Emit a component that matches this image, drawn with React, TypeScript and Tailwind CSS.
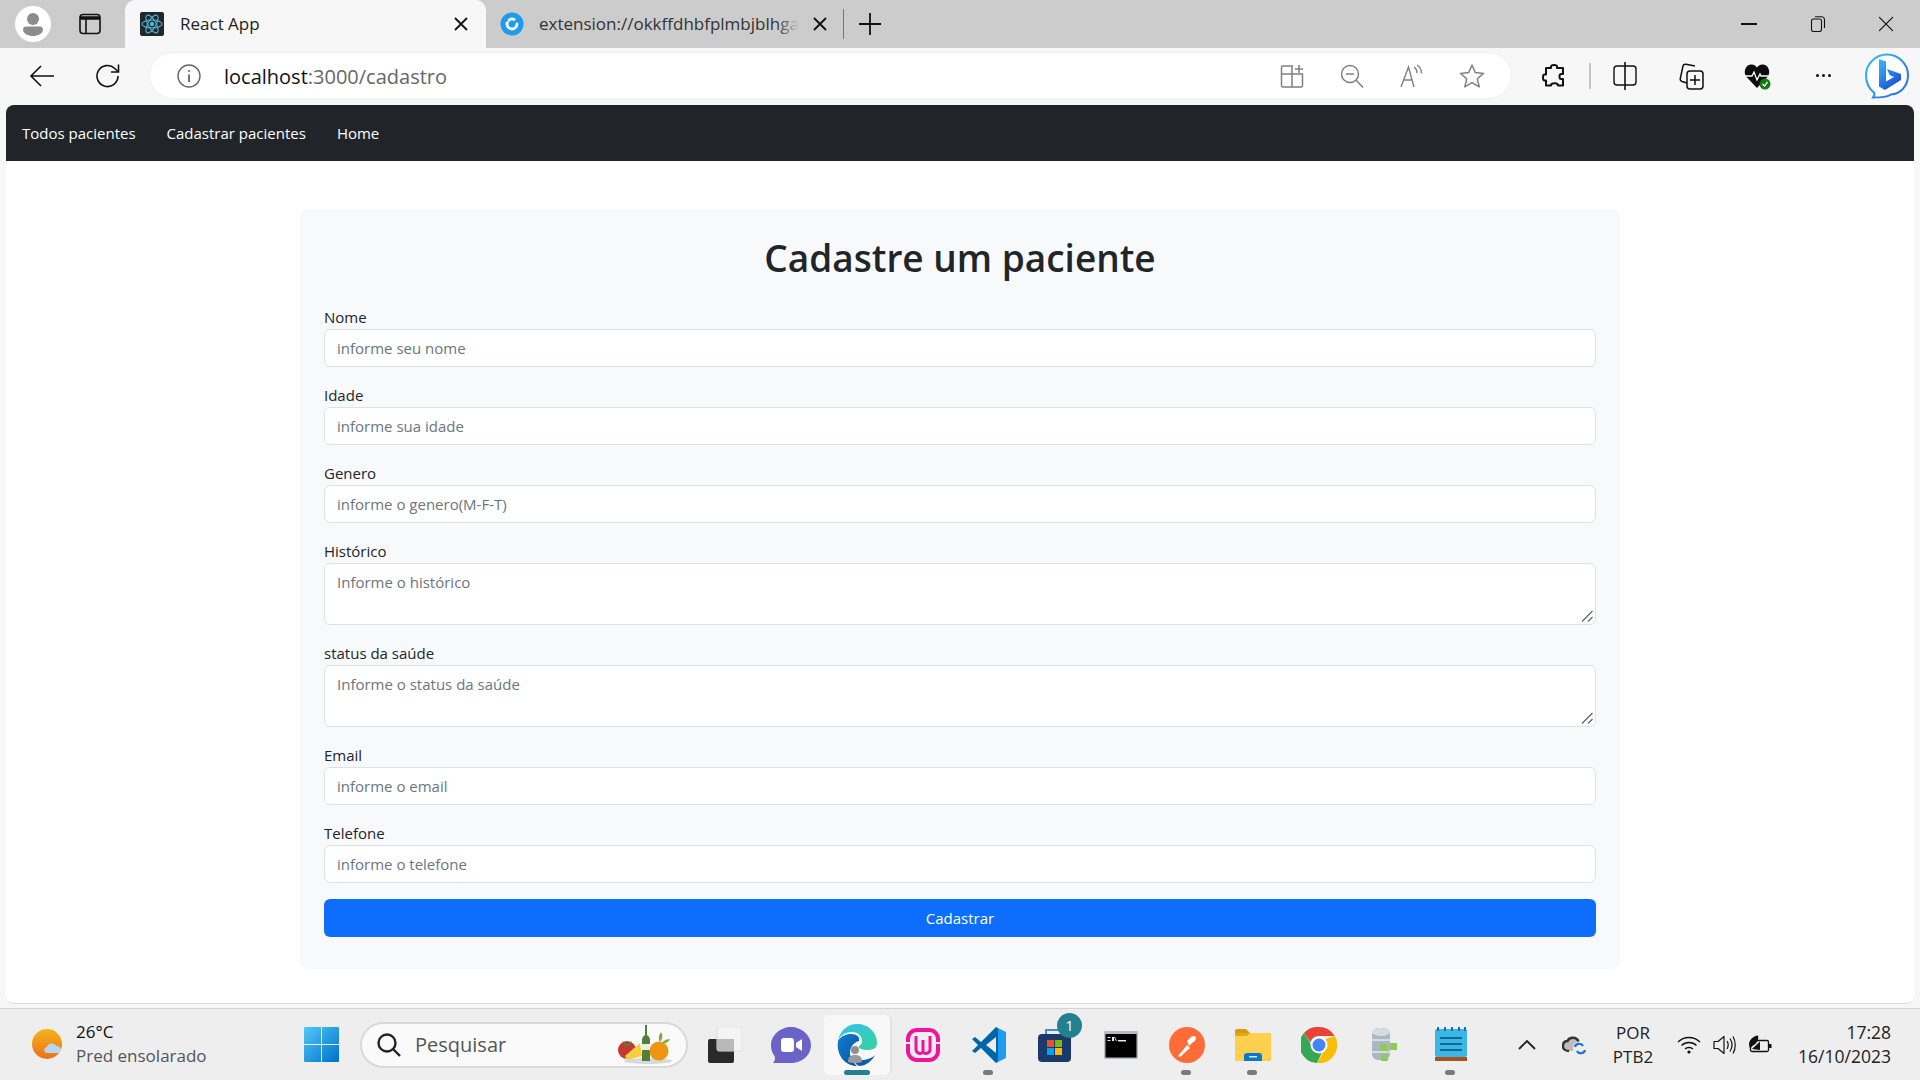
import React from "react";

const font = { fontFamily: '"Open Sans", "Noto Sans", sans-serif' };

function Avatar() {
  return (
    <svg width="36" height="36" viewBox="0 0 36 36">
      <circle cx="18" cy="18" r="18" fill="#ffffff" />
      <circle cx="18" cy="13" r="6" fill="#8c8c8c" />
      <path d="M8 23.5c0-2 1.500-3 3-3h14c1.500 0 3 1 3 3 0 4-5 6.500-10 6.500s-10-2.500-10-6.500z" fill="#8c8c8c" />
    </svg>
  );
}

function TabsIcon() {
  return (
    <svg width="22" height="22" viewBox="0 0 22 22" fill="none" stroke="#111" strokeWidth="1.600">
      <rect x="1" y="1.500" width="20" height="19" rx="3" />
      <path d="M1 5h20" strokeWidth="3.500" />
      <path d="M7 6v14" />
    </svg>
  );
}

function ReactFavicon() {
  return (
    <svg width="24" height="24" viewBox="0 0 24 24" fill="none" stroke="#4fb6d6" strokeWidth="1.100">
      <rect width="24" height="24" rx="2" fill="#22272b" stroke="none" />
      <circle cx="12" cy="12" r="2.200" fill="#4fb6d6" stroke="none" />
      <ellipse cx="12" cy="12" rx="10" ry="4" />
      <ellipse cx="12" cy="12" rx="10" ry="4" transform="rotate(60 12 12)" />
      <ellipse cx="12" cy="12" rx="10" ry="4" transform="rotate(120 12 12)" />
    </svg>
  );
}

function ExtFavicon() {
  return (
    <svg width="24" height="24" viewBox="0 0 24 24" fill="none">
      <circle cx="12" cy="12" r="11.500" fill="#1e9bf0" />
      <path d="M17 12a5 5 0 1 1-3-4.600" stroke="#fff" strokeWidth="2.800" strokeLinecap="round" />
      <path d="M7.500 9.500L5 5.500" stroke="#1e9bf0" strokeWidth="2" />
    </svg>
  );
}

function CloseX({ size = 14, sw = 1.800 }: { size?: number; sw?: number }) {
  return (
    <svg width={size} height={size} viewBox="0 0 14 14" stroke="#111" strokeWidth={sw}>
      <path d="M1 1l12 12M13 1L1 13" />
    </svg>
  );
}

function Back() {
  return (
    <svg width="26" height="24" viewBox="0 0 26 24" fill="none" stroke="#111" strokeWidth="1.600">
      <path d="M25 12H2M12 2L2 12l10 10" />
    </svg>
  );
}

function Reload() {
  return (
    <svg width="26" height="26" viewBox="0 0 26 26" fill="none" stroke="#111" strokeWidth="1.600">
      <path d="M23 13a10.500 10.500 0 1 1-3.200-7.500L23 8.500" />
      <path d="M23.500 1.500v7.500H16" />
    </svg>
  );
}

function Info() {
  return (
    <svg width="24" height="24" viewBox="0 0 24 24" fill="none" stroke="#666" strokeWidth="1.400">
      <circle cx="12" cy="12" r="11" />
      <path d="M12 10.500V18" strokeWidth="1.800" />
      <circle cx="12" cy="7" r="1" fill="#666" stroke="none" />
    </svg>
  );
}

function AddressIcons() {
  return (
    <>
      <div className="flex w-[60px] justify-center">
        <svg width="24" height="24" viewBox="0 0 24 24" fill="none" stroke="#808080" strokeWidth="1.500">
          <path d="M13 2H3a1.500 1.500 0 0 0-1.500 1.500v18A1.500 1.500 0 0 0 3 23h18a1.500 1.500 0 0 0 1.500-1.500V10H1.500M12 2v21" />
          <path d="M19 1v8M15 5h8" />
        </svg>
      </div>
      <div className="flex w-[60px] justify-center">
        <svg width="24" height="24" viewBox="0 0 24 24" fill="none" stroke="#808080" strokeWidth="1.500">
          <circle cx="10" cy="10" r="8.500" />
          <path d="M16 16l7 7.500M6 10h8" />
        </svg>
      </div>
      <div className="flex w-[60px] justify-center">
        <svg width="26" height="24" viewBox="0 0 26 24" fill="none" stroke="#808080" strokeWidth="1.400">
          <path d="M2 23L9.500 3 15 23M4.500 16h8.500" />
          <path d="M15 3c2 1.500 3 3.500 3 6M18 1c3 2 4.500 5 4.500 8.500" />
        </svg>
      </div>
      <div className="flex w-[60px] justify-center">
        <svg width="26" height="26" viewBox="0 0 26 26" fill="none" stroke="#808080" strokeWidth="1.500">
          <path d="M13 2l3.300 7.600 8.200.8-6.200 5.400 1.900 8.100L13 19.700 5.800 23.900l1.900-8.100L1.500 10.400l8.200-.8z" strokeLinejoin="round" />
        </svg>
      </div>
    </>
  );
}

function Puzzle() {
  return (
    <svg width="24" height="26" viewBox="0 0 24 26" fill="none" stroke="#111" strokeWidth="2">
      <path d="M9 3.500C9 1.500 15 1.500 15 3.500V5h6v6h-2c-2 0-2 5 0 5h2v6.500h-5c0-3-7-3-7 0H4v-5H2.500c-2 0-2-6 0-6H4V5h5z" strokeLinejoin="round" />
    </svg>
  );
}

function SplitIcon() {
  return (
    <svg width="24" height="30" viewBox="0 0 24 30" fill="none" stroke="#111" strokeWidth="1.400">
      <rect x="1" y="5" width="22" height="19" rx="3" />
      <path d="M12 1v28" strokeWidth="1.600" />
    </svg>
  );
}

function CollectionsIcon() {
  return (
    <svg width="26" height="28" viewBox="0 0 26 28" fill="none" stroke="#111" strokeWidth="1.500">
      <path d="M9 21l-5-1.500C2.500 19 2 18 2.300 16.500L5 4c.3-1.500 1.500-2 3-1.800L17 4" />
      <rect x="9" y="9" width="16" height="18" rx="3" fill="#f7f7f7" />
      <path d="M17 13v10M12 18h10" />
    </svg>
  );
}

function HealthIcon() {
  return (
    <svg width="28" height="28" viewBox="0 0 28 28" fill="none">
      <path d="M13 26L2.500 15C-1 11 1 3 7 2.500c3-.2 5 1.500 6 3 1-1.500 3-3.200 6-3 6 .5 8 8.500 4.500 12.500z" fill="#0c0c0c" />
      <path d="M1 14h7l2-4 3 8 3-6 1 2h9" stroke="#fff" strokeWidth="1.300" />
      <circle cx="21" cy="22" r="5.500" fill="#107c10" />
      <path d="M18.500 22l2 2 3-4" stroke="#fff" strokeWidth="1.300" />
    </svg>
  );
}

function Bing() {
  return (
    <svg width="46" height="46" viewBox="0 0 46 46" fill="none">
      <defs>
        <linearGradient id="bingRing" x1="0" y1="0" x2="1" y2="1">
          <stop offset="0" stopColor="#35c1f1" />
          <stop offset="1" stopColor="#2563e8" />
        </linearGradient>
        <linearGradient id="bingB" x1="0" y1="0" x2="0.600" y2="1">
          <stop offset="0" stopColor="#37bdf8" />
          <stop offset="1" stopColor="#1b4fd8" />
        </linearGradient>
      </defs>
      <path d="M23 1.500c11 0 21 9 21 20.500S36 41 27 41.500c-3 2-10 3-18 3 1-1.500 2-3 1.500-4.500C5 36 2 29 2 22 2 10.500 12 1.500 23 1.500z" fill="#fff" stroke="url(#bingRing)" strokeWidth="2" />
      <path d="M15 6l7 2.500v20l8-4.500-4.500-2-2.500-6 14 5v6l-16 10-6-3.500z" fill="url(#bingB)" />
    </svg>
  );
}

function Weather() {
  return (
    <svg width="34" height="34" viewBox="0 0 34 34">
      <defs>
        <linearGradient id="sun" x1="0" y1="0" x2="0" y2="1">
          <stop offset="0" stopColor="#f8b21c" />
          <stop offset="1" stopColor="#ea7317" />
        </linearGradient>
      </defs>
      <circle cx="15" cy="16" r="15" fill="url(#sun)" />
      <path d="M15 25c-3 0-4.500-5 0-6 .5-3.500 7-5 9-1 5-.5 7 6 2.500 7z" fill="#b8d7f2" />
    </svg>
  );
}

function WinLogo() {
  return (
    <svg width="35" height="35" viewBox="0 0 35 35">
      <defs>
        <linearGradient id="win" x1="0" y1="0" x2="1" y2="1">
          <stop offset="0" stopColor="#52c8f8" />
          <stop offset="1" stopColor="#0070c9" />
        </linearGradient>
      </defs>
      <path d="M1 0h16v17H0V1a1 1 0 0 1 1-1zM18 0h16a1 1 0 0 1 1 1v16H18zM0 18h17v17H1a1 1 0 0 1-1-1zM18 18h17v16a1 1 0 0 1-1 1H18z" fill="url(#win)" />
    </svg>
  );
}

function Food() {
  return (
    <svg width="56" height="42" viewBox="0 0 56 42">
      <ellipse cx="30" cy="37" rx="24" ry="3" fill="#d8d8d8" />
      <circle cx="9" cy="26" r="9" fill="#c5382f" />
      <path d="M4 17l5 3 5-3-3 5H7z" fill="#3d8a3a" />
      <path d="M27 1h2v10c3 2 3 4 3 6v20h-8V17c0-2 0-4 3-6z" fill="#4f7f3a" />
      <rect x="24" y="20" width="8" height="6" fill="#f0ece0" />
      <circle cx="41" cy="27" r="9.500" fill="#ee9512" />
      <path d="M42 18c-2-4-1-7 1-10 2 3 2 7-1 10zM44 19c2-3 5-4 8-4-1 3-4 5-8 4z" fill="#85a83a" />
      <path d="M7 32l15-13 2 13-15 4z" fill="#f7cf3d" />
    </svg>
  );
}

function TaskView() {
  return (
    <svg width="34" height="36" viewBox="0 0 34 36">
      <rect x="0" y="12" width="26" height="24" rx="2" fill="#2a2a2a" />
      <rect x="9" y="0" width="25" height="24" rx="2" fill="#f4f4f4" stroke="#e0e0e0" />
      <rect x="9" y="12" width="17" height="12" fill="#b9b9b9" />
    </svg>
  );
}

function ChatIcon() {
  return (
    <svg width="40" height="36" viewBox="0 0 40 36">
      <path d="M20 0c10 0 20 8 20 18 0 11-10 18-20 18H2c2-2 2.500-5 1.500-7C1 26 0 22 0 18 0 8 10 0 20 0z" fill="#6b63c8" />
      <rect x="10" y="11" width="13" height="14" rx="3" fill="#fff" />
      <path d="M25 16l6-4v12l-6-4z" fill="#fff" />
    </svg>
  );
}

function EdgeIcon() {
  return (
    <svg width="42" height="44" viewBox="0 0 42 44">
      <defs>
        <linearGradient id="edgeA" x1="0" y1="0" x2="1" y2="1">
          <stop offset="0" stopColor="#35c1f1" />
          <stop offset="1" stopColor="#36d39a" />
        </linearGradient>
        <linearGradient id="edgeB" x1="0" y1="0" x2="1" y2="1">
          <stop offset="0" stopColor="#0f7fd0" />
          <stop offset="1" stopColor="#0a4f9e" />
        </linearGradient>
      </defs>
      <path d="M2 18C4 7 12 1 21 1c11 0 20 8 20 19 0 5-4 7-9 7-5 0-9-1-9-3 0-2 3-2 3-6 0-5-4-9-10-9C10 9 4 12 2 18z" fill="url(#edgeA)" />
      <path d="M2 18c3-5 8-7 13-7 6 0 9 3 8 7-5 1-9 6-9 12 0 4 2 9 7 13C10 43 0 33 2 18z" fill="url(#edgeB)" />
      <path d="M23 43c-4-2-6-6-6-8 4 3 17 3 22-3-3 6-9 11-16 11z" fill="#0d5fa8" />
      <circle cx="19" cy="27" r="4" fill="#8f8f8f" />
      <path d="M12 39c0-5 2-7 7-7s7 2 7 7c-4 1.500-10 1.500-14 0z" fill="#9a9a9a" />
    </svg>
  );
}

function WampIcon() {
  return (
    <svg width="34" height="34" viewBox="0 0 34 34" fill="none">
      <rect x="2" y="2" width="30" height="30" rx="9" stroke="#f0149a" strokeWidth="4" />
      <path d="M0 15h6M28 15h6" stroke="#eeeeee" strokeWidth="2" />
      <path d="M10 8v14a4 4 0 0 0 7 2 4 4 0 0 0 7-2V8M17 12v12" stroke="#f0149a" strokeWidth="3" />
    </svg>
  );
}

function VsCode() {
  return (
    <svg width="34" height="36" viewBox="0 0 34 36">
      <path d="M24 0l10 5v26l-10 5V0z" fill="#1f9cf0" />
      <path d="M24 0L9 15 3 10 0 12l6 6-6 6 3 2 6-5 15 15 2-2V2z" fill="#0065a9" />
      <path d="M24 10v16l-10-8z" fill="#eeeeee" />
    </svg>
  );
}

function StoreIcon() {
  return (
    <div className="relative">
      <svg width="34" height="34" viewBox="0 0 34 34">
        <path d="M8 7V2h15v5" fill="none" stroke="#3b8fd6" strokeWidth="2" />
        <rect x="0" y="6" width="33" height="28" rx="4" fill="#1b3a6b" />
        <rect x="9" y="12" width="7" height="7" fill="#f25022" />
        <rect x="17" y="12" width="7" height="7" fill="#7fba00" />
        <rect x="9" y="20" width="7" height="7" fill="#00a4ef" />
        <rect x="17" y="20" width="7" height="7" fill="#ffb900" />
      </svg>
      <span className="absolute -top-[15px] left-[19px] flex h-[25px] w-[25px] items-center justify-center rounded-full bg-[#23808f] text-[14px] text-white">1</span>
    </div>
  );
}

function CmdIcon() {
  return (
    <svg width="34" height="28" viewBox="0 0 34 28">
      <rect width="34" height="28" rx="1" fill="#b9bcbf" />
      <rect x="1.500" y="3" width="31" height="23.500" fill="#000" />
      <path d="M3.500 6h3v1h-3zM3.500 9h3v1h-3zM8 6h2v4H8zM11 6l2 4h-1l-2-4zM14 9h8v1.500h-8z" fill="#e8e8e8" />
    </svg>
  );
}

function PostmanIcon() {
  return (
    <svg width="36" height="36" viewBox="0 0 36 36">
      <circle cx="18" cy="18" r="18" fill="#ff6c37" />
      <path d="M9 29l9-11 3 3-10 9zM18 14l4-4c2-2 5-1 5 1s-2 4-4 5l-3 3z" fill="#fff" />
    </svg>
  );
}

function FolderIcon() {
  return (
    <svg width="36" height="32" viewBox="0 0 36 32">
      <path d="M0 2a2 2 0 0 1 2-2h9l4 4h-15z" fill="#d99a12" />
      <rect x="0" y="4" width="36" height="28" rx="1" fill="#ffcf4d" />
      <path d="M0 4h15l-3 3H0z" fill="#e4a718" />
      <path d="M9 32v-5a3 3 0 0 1 3-3h12a3 3 0 0 1 3 3v5z" fill="#0a78cc" />
      <rect x="14" y="27" width="8" height="1.500" fill="#d8ecfa" />
    </svg>
  );
}

function ChromeIcon() {
  return (
    <svg width="36" height="36" viewBox="0 0 36 36">
      <path d="M18 0a18 18 0 0 1 15.600 9H18a9 9 0 0 0-8.600 6.300L3.200 5.800A18 18 0 0 1 18 0z" fill="#ea4335" />
      <path d="M3.200 5.800L11 19a8 8 0 0 0 10 6l-5 11A18 18 0 0 1 3.200 5.800z" fill="#34a853" />
      <path d="M33.600 9A18 18 0 0 1 16 36l7.800-13.500A8 8 0 0 0 24 12.500z" fill="#fbbc05" />
      <circle cx="18" cy="18" r="8.500" fill="#fff" />
      <circle cx="18" cy="18" r="6.500" fill="#4285f4" />
    </svg>
  );
}

function DbIcon() {
  return (
    <svg width="32" height="36" viewBox="0 0 32 36">
      <rect x="3" y="1" width="18" height="32" rx="6" fill="#a9b8c4" />
      <rect x="3" y="12" width="18" height="2" fill="#d5dde3" />
      <rect x="3" y="24" width="18" height="2" fill="#d5dde3" />
      <ellipse cx="12" cy="5" rx="9" ry="4" fill="#d5dde3" />
      <rect x="11" y="17" width="7" height="7" fill="#8fca5a" />
      <rect x="21" y="16" width="7" height="7" fill="#8fca5a" />
      <rect x="12" y="27" width="7" height="7" fill="#8fca5a" />
    </svg>
  );
}

function NotepadIcon() {
  return (
    <svg width="32" height="36" viewBox="0 0 32 36">
      <rect x="0" y="2" width="32" height="28" rx="2" fill="#3cb6e4" />
      <rect x="0" y="30" width="32" height="4" fill="#a8521c" />
      <path d="M3 0v4M10 0v4M17 0v4M24 0v4M30 0v4" stroke="#1b6fa8" strokeWidth="2" />
      <path d="M5 11h22M5 17h22M5 23h22" stroke="#0b6a94" strokeWidth="2" />
    </svg>
  );
}

function Wifi() {
  return (
    <svg width="24" height="18" viewBox="0 0 24 18" fill="none" stroke="#111" strokeWidth="1.300">
      <path d="M1 6c6-6 16-6 22 0M4.500 9.500c4-4 11-4 15 0M8 13c2-2 6-2 8 0" />
      <circle cx="12" cy="16" r="1.600" fill="#111" stroke="none" />
    </svg>
  );
}

function Volume() {
  return (
    <svg width="24" height="20" viewBox="0 0 24 20" fill="none" stroke="#111" strokeWidth="1.200">
      <path d="M1 6.500h4L11 1.500v17l-6-5H1z" strokeLinejoin="round" />
      <path d="M14 6c1.500 2.500 1.500 5.500 0 8M17 3.500c2.500 4 2.500 9 0 13M20 1.500c3 5 3 12 0 17" />
    </svg>
  );
}

function Battery() {
  return (
    <svg width="24" height="20" viewBox="0 0 24 20" fill="none">
      <rect x="2.500" y="5.500" width="18" height="11" rx="1.500" stroke="#111" strokeWidth="1.300" />
      <rect x="21" y="9" width="2.500" height="4" fill="#111" />
      <path d="M4 14L12 6.500V15z" fill="#111" />
      <path d="M1 10C1 5 5 1 10 .5c1 4-1 8-5 10l-3 3z" fill="#111" />
    </svg>
  );
}

function CloudSync() {
  return (
    <svg width="26" height="22" viewBox="0 0 26 22" fill="none">
      <path d="M7 17C3 17 .5 15 1 11c.5-3 3-4 4.500-4 1.500-4 9-5 11 .5" stroke="#333" strokeWidth="2.400" fill="#bdbdbd" />
      <path d="M7 17V8h10v9z" fill="#bdbdbd" />
      <circle cx="18" cy="14.500" r="7" fill="#eeeeee" />
      <path d="M13 13c.5-3 6-5 8-1M23 16c-.5 3-6 5-8 1" stroke="#1a73d9" strokeWidth="2.200" />
    </svg>
  );
}

function Field({ label, placeholder }: { label: string; placeholder: string }) {
  return (
    <div className="mb-4">
      <label className="block text-[15px] leading-6 text-[#212529]">{label}</label>
      <input
        placeholder={placeholder}
        className="block h-[38px] w-full rounded-[6px] border border-[#dee2e6] bg-white px-3 py-1.5 text-[15px] leading-6 placeholder:text-[#6c757d]"
      />
    </div>
  );
}

function AreaField({ label, placeholder }: { label: string; placeholder: string }) {
  return (
    <div className="mb-4">
      <label className="block text-[15px] leading-6 text-[#212529]">{label}</label>
      <div className="relative">
        <textarea
          placeholder={placeholder}
          className="block h-[62px] w-full resize-none rounded-[6px] border border-[#dee2e6] bg-white px-3 py-1.5 text-[15px] leading-6 placeholder:text-[#6c757d]"
        />
        <svg className="pointer-events-none absolute right-[3px] bottom-[3px]" width="12" height="12" viewBox="0 0 12 12" stroke="#666" strokeWidth="1.300">
          <path d="M1 11.500L11.500 1M7 11.500l4.500-4.500" />
        </svg>
      </div>
    </div>
  );
}

function TaskIcon({ children, dot, active }: { children: React.ReactNode; dot?: boolean; active?: boolean }) {
  return (
    <div className={`relative flex h-[60px] w-[66px] items-center justify-center ${active ? "rounded-[5px] bg-[#f8f8f8] shadow-[2px_0_0_#e4e4e4]" : ""}`}>
      {children}
      {dot && <span className="absolute bottom-0 left-[27px] h-[5px] w-[10px] rounded-full bg-[#7a7a7a]" />}
      {active && <span className="absolute bottom-0 left-[20px] h-[5px] w-[26px] rounded-full bg-[#23808f]" />}
    </div>
  );
}

export default function App() {
  return (
    <div style={font} className="flex h-screen w-full flex-col overflow-hidden bg-[#f7f7f7] text-[#111]">
      {/* tab strip */}
      <div className="flex h-12 shrink-0 items-center bg-[#cccccc]">
        <div className="ml-[15px] flex w-[110px] shrink-0 items-center gap-[28px]">
          <Avatar />
          <TabsIcon />
        </div>
        <div className="flex h-12 w-[361px] shrink-0 items-center rounded-t-[10px] bg-[#f7f7f7] pl-[15px] pr-[18px]">
          <ReactFavicon />
          <span className="ml-[16px] flex-1 text-[17px] text-[#222]">React App</span>
          <CloseX />
        </div>
        <div className="flex h-12 w-[357px] shrink-0 items-center pl-[14px] pr-[16px]">
          <ExtFavicon />
          <span className="relative ml-[15px] whitespace-nowrap text-[17px] text-[#333]">
            extension://okkffdhbfplmbjblhga
            <span className="absolute top-0 right-0 h-full w-[22px] bg-gradient-to-r from-transparent to-[#cccccc]" />
          </span>
          <span className="ml-auto"><CloseX /></span>
        </div>
        <div className="h-[30px] w-px bg-[#777]" />
        <svg className="ml-[15px]" width="22" height="22" viewBox="0 0 22 22" stroke="#111" strokeWidth="1.800">
          <path d="M11 0v22M0 11h22" />
        </svg>
        <div className="ml-auto flex items-center">
          <div className="flex w-[69px] justify-center">
            <div className="h-[1.500px] w-4 bg-[#111]" />
          </div>
          <div className="flex w-[69px] justify-center">
            <svg width="16" height="16" viewBox="0 0 16 16" fill="none" stroke="#111" strokeWidth="1.100">
              <rect x="1.500" y="3" width="10" height="12.500" rx="2" />
              <path d="M5 .8h6.500a3 3 0 0 1 3 3V12" />
            </svg>
          </div>
          <div className="flex w-[68px] justify-center">
            <CloseX size={16} sw={1.100} />
          </div>
        </div>
      </div>

      {/* toolbar */}
      <div className="flex h-[57px] shrink-0 items-center pb-[2px]">
        <div className="flex w-[150px] shrink-0 items-center pl-[29px]">
          <Back />
          <span className="ml-[40px]"><Reload /></span>
        </div>
        <div className="flex h-[45px] w-[1361px] shrink-0 items-center rounded-full bg-white pl-[27px] pr-[9px] shadow-[0_0_2px_rgba(0,0,0,0.08)]">
          <Info />
          <span className="ml-[23px] pt-[2px] text-[20px] text-[#111]">
            localhost<span className="text-[#666]">:3000/cadastro</span>
          </span>
          <div className="ml-auto flex items-center">
            <AddressIcons />
          </div>
        </div>
        <div className="ml-[31px] flex items-center">
          <Puzzle />
          <div className="ml-[23px] h-[26px] w-[2px] bg-[#c4c4c4]" />
          <span className="ml-[22px]"><SplitIcon /></span>
          <span className="ml-[41px]"><CollectionsIcon /></span>
          <span className="ml-[40px]"><HealthIcon /></span>
          <div className="ml-[44px] flex gap-[3px]">
            <span className="h-[3px] w-[3px] rounded-full bg-[#111]" />
            <span className="h-[3px] w-[3px] rounded-full bg-[#111]" />
            <span className="h-[3px] w-[3px] rounded-full bg-[#111]" />
          </div>
          <span className="ml-[33px]"><Bing /></span>
        </div>
      </div>

      {/* page */}
      <div className="mx-[6px] h-[899px] shrink-0 overflow-hidden rounded-[8px] border-b border-[#dcdcdc] bg-white">
        <nav className="flex h-14 items-center gap-[31px] bg-[#212529] pl-4 text-[15px] text-white">
          <a>Todos pacientes</a>
          <a>Cadastrar pacientes</a>
          <a>Home</a>
        </nav>
        <div className="mx-auto mt-12 w-[1320px] rounded-[8px] bg-[#f8f9fa] px-6 pt-6 pb-8">
          <h1 className="mb-6 pt-[1px] text-center text-[37px] leading-[47px] font-semibold text-[#212529]">Cadastre um paciente</h1>
          <Field label="Nome" placeholder="informe seu nome" />
          <Field label="Idade" placeholder="informe sua idade" />
          <Field label="Genero" placeholder="informe o genero(M-F-T)" />
          <AreaField label="Histórico" placeholder="Informe o histórico" />
          <AreaField label="status da saúde" placeholder="Informe o status da saúde" />
          <Field label="Email" placeholder="informe o email" />
          <Field label="Telefone" placeholder="informe o telefone" />
          <button className="block h-[38px] w-full rounded-[6px] bg-[#0d6efd] text-[15px] text-white">Cadastrar</button>
        </div>
      </div>

      {/* taskbar */}
      <div className="mt-[4px] flex min-h-0 flex-1 items-center border-t border-[#d4d4d4] bg-[#eeeeee]">
        <div className="ml-[32px] flex w-[272px] shrink-0 items-center">
          <Weather />
          <div className="ml-[10px] -mt-[2px] text-[17px] leading-[24px]">
            <div className="text-[#111]">26°C</div>
            <div className="text-[#555]">Pred ensolarado</div>
          </div>
        </div>
        <WinLogo />
        <div className="ml-[21px] flex h-[46px] w-[328px] shrink-0 items-center rounded-full border-2 border-[#d9d9d9] bg-[#fafafa] pl-[14px] pr-[12px]">
          <svg width="26" height="26" viewBox="0 0 26 26" fill="none" stroke="#222" strokeWidth="2.400">
            <circle cx="11" cy="11" r="8.500" />
            <path d="M17 17l7 7" />
          </svg>
          <span className="ml-[13px] flex-1 text-[20px] text-[#555]">Pesquisar</span>
          <Food />
        </div>
        <div className="ml-[4px] flex items-center">
          <TaskIcon><TaskView /></TaskIcon>
          <TaskIcon><ChatIcon /></TaskIcon>
          <TaskIcon active><EdgeIcon /></TaskIcon>
          <TaskIcon><WampIcon /></TaskIcon>
          <TaskIcon dot><VsCode /></TaskIcon>
          <TaskIcon><StoreIcon /></TaskIcon>
          <TaskIcon><CmdIcon /></TaskIcon>
          <TaskIcon dot><PostmanIcon /></TaskIcon>
          <TaskIcon dot><FolderIcon /></TaskIcon>
          <TaskIcon><ChromeIcon /></TaskIcon>
          <TaskIcon><DbIcon /></TaskIcon>
          <TaskIcon dot><NotepadIcon /></TaskIcon>
        </div>
        <div className="ml-[34px] flex flex-1 items-center pr-[29px]">
          <svg width="18" height="10" viewBox="0 0 18 10" fill="none" stroke="#222" strokeWidth="1.800">
            <path d="M1 9l8-8 8 8" />
          </svg>
          <span className="ml-[26px]"><CloudSync /></span>
          <div className="ml-[21px] w-[48px] text-center text-[17px] leading-[24px] text-[#222]">
            <div>POR</div>
            <div>PTB2</div>
          </div>
          <span className="ml-[20px]"><Wifi /></span>
          <span className="ml-[12px]"><Volume /></span>
          <span className="ml-[11px]"><Battery /></span>
          <div className="ml-auto -mt-[2px] text-right text-[17.5px] leading-[24px] text-[#222]">
            <div>17:28</div>
            <div>16/10/2023</div>
          </div>
        </div>
      </div>
    </div>
  );
}
